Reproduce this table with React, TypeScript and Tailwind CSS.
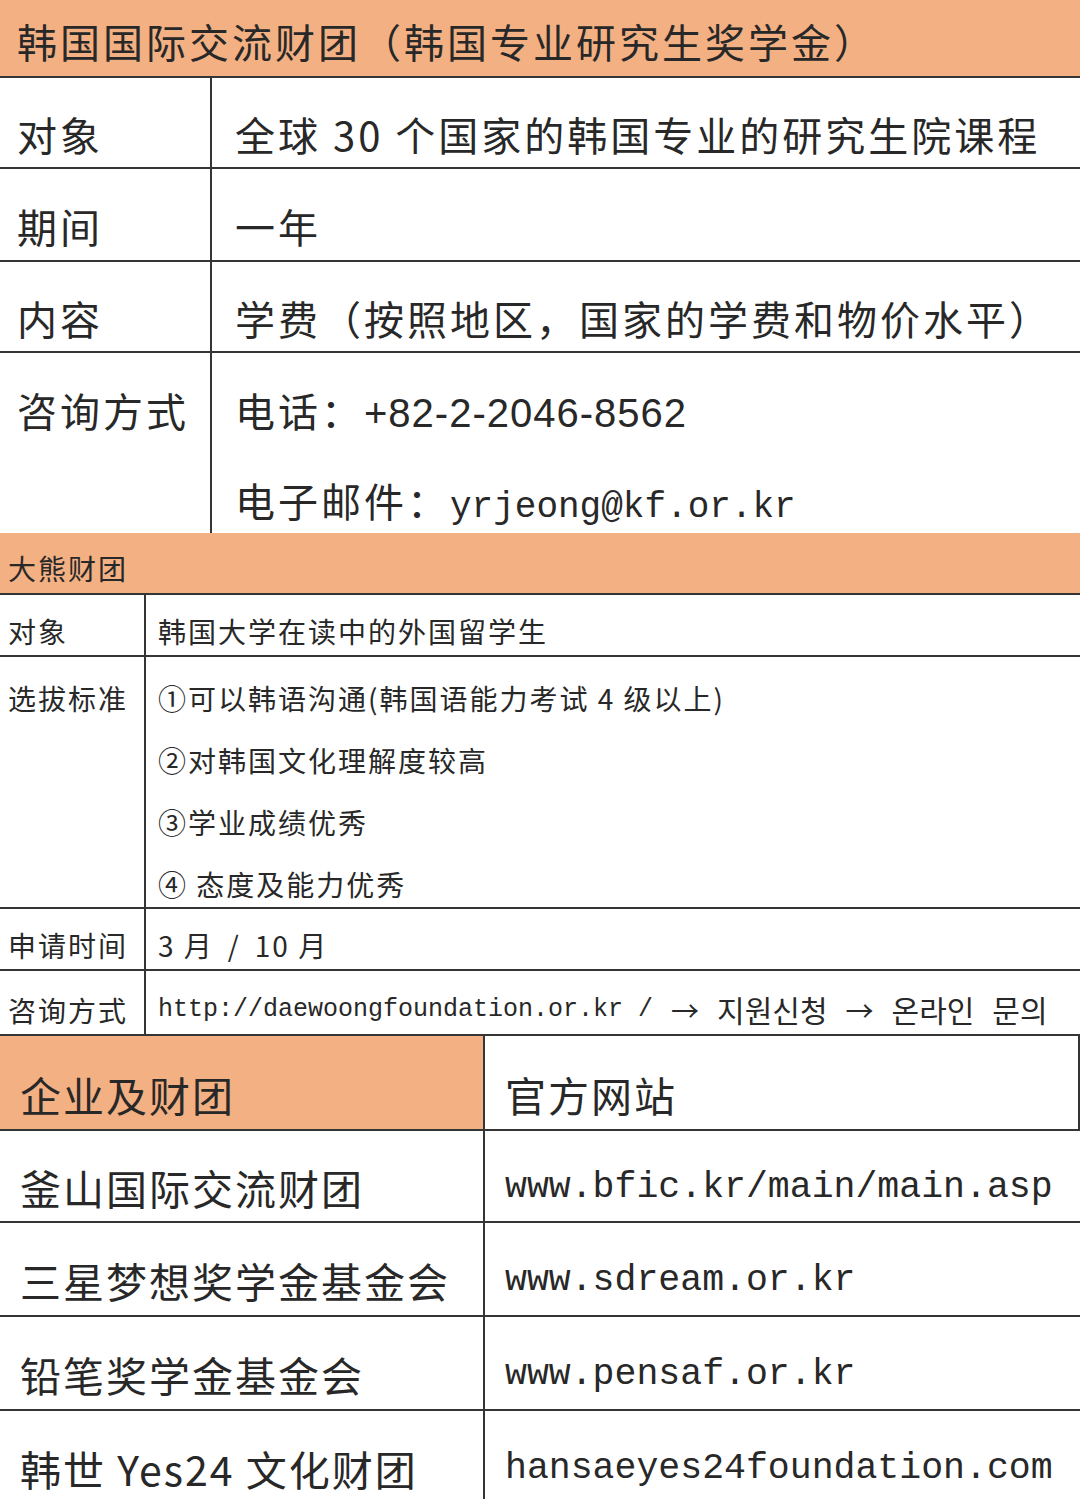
const cjk = "font-['Noto_Sans_CJK_SC','Noto_Sans_CJK_KR',sans-serif]"
const mono = "font-['Liberation_Mono','Noto_Sans_CJK_SC',monospace]"
const line = "border-[#353535]"

type Row = { label: string; value: React.ReactNode; h: string }

const kfRows: Row[] = [
  { label: "对象", value: "全球 30 个国家的韩国专业的研究生院课程", h: "h-[91px]" },
  { label: "期间", value: "一年", h: "h-[93px]" },
  { label: "内容", value: "学费（按照地区，国家的学费和物价水平）", h: "h-[91px]" },
]

const sites = [
  { name: "釜山国际交流财团", url: "www.bfic.kr/main/main.asp", h: "h-[92px]" },
  { name: "三星梦想奖学金基金会", url: "www.sdream.or.kr", h: "h-[94px]" },
  { name: "铅笔奖学金基金会", url: "www.pensaf.or.kr", h: "h-[94px]" },
  { name: "韩世 Yes24 文化财团", url: "hansaeyes24foundation.com", h: "h-[92px]" },
]

function KfTable() {
  return (
    <div className="text-[40px] tracking-[3px]">
      <div className={`flex h-[78px] items-center border-b-2 ${line} bg-[#f3b083] pl-[17px] pt-[6px]`}>
        韩国国际交流财团（韩国专业研究生奖学金）
      </div>
      {kfRows.map((r) => (
        <div key={r.label} className={`flex ${r.h} border-b-2 ${line}`}>
          <div className={`flex w-[212px] shrink-0 items-center border-r-2 ${line} pl-[17px] pt-[22px]`}>
            {r.label}
          </div>
          <div className="flex items-center pl-[23px] pt-[22px]">{r.value}</div>
        </div>
      ))}
      <div className="flex h-[180px] leading-[87px]">
        <div className={`w-[212px] shrink-0 border-r-2 ${line} pl-[17px] pt-[14px]`}>咨询方式</div>
        <div className="pl-[23px] pt-[14px]">
          <div>
            电话：<span className="font-['Liberation_Sans',sans-serif] tracking-[1px]">+82-2-2046-8562</span>
          </div>
          <div>
            电子邮件：<span className={`${mono} text-[36px] tracking-[0px]`}>yrjeong@kf.or.kr</span>
          </div>
        </div>
      </div>
    </div>
  )
}

function DaewoongTable() {
  const criteria = ["①可以韩语沟通(韩国语能力考试 4 级以上)", "②对韩国文化理解度较高", "③学业成绩优秀", "④ 态度及能力优秀"]
  return (
    <div className="text-[28px] tracking-[2px]">
      <div className={`flex h-[62px] items-center border-b-2 ${line} bg-[#f3b083] pl-[8px] pt-[10px]`}>大熊财团</div>
      <div className={`flex h-[62px] border-b-2 ${line}`}>
        <div className={`flex w-[146px] shrink-0 items-center border-r-2 ${line} pl-[8px] pt-[12px]`}>对象</div>
        <div className="flex items-center pl-[12px] pt-[12px]">韩国大学在读中的外国留学生</div>
      </div>
      <div className={`flex h-[252px] border-b-2 ${line} leading-[62px]`}>
        <div className={`w-[146px] shrink-0 border-r-2 ${line} pl-[8px] pt-[10px]`}>选拔标准</div>
        <div className="pl-[12px] pt-[10px]">
          {criteria.map((c) => (
            <div key={c}>{c}</div>
          ))}
        </div>
      </div>
      <div className={`flex h-[62px] border-b-2 ${line}`}>
        <div className={`flex w-[146px] shrink-0 items-center border-r-2 ${line} pl-[8px] pt-[12px]`}>申请时间</div>
        <div className="flex items-center pl-[12px] pt-[12px]">
          3 月 <span className="mx-[14px]">/</span> 10 月
        </div>
      </div>
      <div className={`flex h-[65px] border-b-2 ${line}`}>
        <div className={`flex w-[146px] shrink-0 items-center border-r-2 ${line} pl-[8px] pt-[14px]`}>咨询方式</div>
        <div className="flex items-center gap-[18px] whitespace-nowrap pl-[12px] pt-[14px] tracking-normal">
          <span className={`${mono} text-[25px]`}>http://daewoongfoundation.or.kr /</span>
          <span>→</span>
          <span className="text-[30px]">지원신청</span>
          <span>→</span>
          <span className="text-[30px]">온라인</span>
          <span className="text-[30px]">문의</span>
        </div>
      </div>
    </div>
  )
}

function SiteTable() {
  return (
    <div className="text-[41px] tracking-[2px]">
      <div className={`flex h-[95px] border-b-2 ${line}`}>
        <div className={`flex w-[485px] shrink-0 items-center border-r-2 ${line} bg-[#f3b083] pl-[20px] pt-[24px]`}>
          企业及财团
        </div>
        <div className={`flex flex-1 items-center border-r-2 ${line} pl-[20px] pt-[24px]`}>官方网站</div>
      </div>
      {sites.map((s, i) => (
        <div key={s.url} className={`flex ${s.h} ${i < sites.length - 1 ? `border-b-2 ${line}` : ""}`}>
          <div className={`flex w-[485px] shrink-0 items-center border-r-2 ${line} pl-[20px] pt-[24px]`}>{s.name}</div>
          <div className={`flex items-center pl-[20px] pt-[24px] ${mono} text-[36.5px] tracking-normal`}>{s.url}</div>
        </div>
      ))}
    </div>
  )
}

export default function App() {
  return (
    <div className={`h-[1499px] w-[1080px] overflow-hidden bg-white text-[#282828] ${cjk}`}>
      <KfTable />
      <DaewoongTable />
      <SiteTable />
    </div>
  )
}
